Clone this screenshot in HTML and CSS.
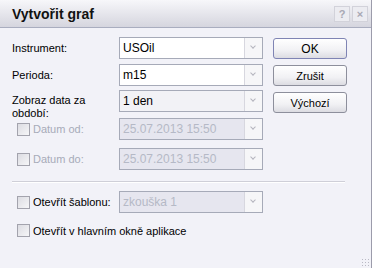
FILE: index.html
```html
<!DOCTYPE html>
<html>
<head>
    <title>Vytvořit graf</title>
    <link rel="stylesheet" href="styles.css">
</head>
<body>
    <div class="dialog">
        <div class="titlebar">
            <span class="title">Vytvořit graf</span>
            <span class="tb-btn">?</span>
            <span class="tb-btn">&#215;</span>
        </div>
        <div class="content">
            <div class="form">
                <div class="row row-instrument">
                    <label class="lbl">Instrument:</label>
                    <div class="combo"><span class="val">USOil</span><span class="arrow"></span></div>
                </div>
                <div class="row row-perioda">
                    <label class="lbl">Perioda:</label>
                    <div class="combo"><span class="val">m15</span><span class="arrow"></span></div>
                </div>
                <div class="row row-zobraz">
                    <label class="lbl lbl-two">Zobraz data za<br>období:</label>
                    <div class="combo combo-grey"><span class="val">1 den</span><span class="arrow"></span></div>
                </div>
                <div class="row row-od">
                    <label class="lbl lbl-check disabled"><span class="check"></span>Datum od:</label>
                    <div class="combo combo-disabled"><span class="val">25.07.2013 15:50</span><span class="arrow"></span></div>
                </div>
                <div class="row row-do">
                    <label class="lbl lbl-check disabled"><span class="check"></span>Datum do:</label>
                    <div class="combo combo-disabled"><span class="val">25.07.2013 15:50</span><span class="arrow"></span></div>
                </div>
            </div>
            <div class="buttons">
                <button class="btn btn-default">OK</button>
                <button class="btn">Zrušit</button>
                <button class="btn">Výchozí</button>
            </div>
        </div>
        <div class="separator"></div>
        <div class="row row-sablona">
            <label class="lbl lbl-check"><span class="check"></span>Otevřít šablonu:</label>
            <div class="combo combo-disabled"><span class="val">zkouška 1</span><span class="arrow"></span></div>
        </div>
        <div class="row row-hlavni">
            <label class="lbl lbl-check"><span class="check"></span>Otevřít v hlavním okně aplikace</label>
        </div>
        <div class="grip"></div>
    </div>
</body>
</html>
```
FILE: styles.css
```css
body {
    margin: 0;
    background-color: #ffffff;
    font-family: "Liberation Sans", Arial, sans-serif;
    font-size: 11px;
    color: #000000;
}

.dialog {
    position: relative;
    width: 371px;
    height: 268px;
    background-color: #f2f2f8;
    border-right: 1px solid #9c9cab;
    overflow: hidden;
}

.titlebar {
    display: flex;
    align-items: center;
    height: 28px;
    box-sizing: border-box;
    padding: 0 3px 0 12px;
    background: linear-gradient(#f7f7fa, #e6e6ec 50%, #d5d5de);
    border-bottom: 1px solid #a9adbf;
}

.title {
    flex: 1;
    font-size: 14px;
    font-weight: bold;
    color: #111111;
}

.tb-btn {
    width: 16px;
    height: 16px;
    margin-left: 2px;
    box-sizing: border-box;
    border: 1px solid #d2d2da;
    background-color: #ececf1;
    color: #a8a8b4;
    font-size: 11px;
    font-weight: bold;
    line-height: 14px;
    text-align: center;
}

.content {
    display: flex;
    padding: 9px 0 0 12px;
}

.form {
    width: 251px;
}

.row {
    display: flex;
    align-items: center;
}

.lbl {
    width: 107px;
    display: flex;
    align-items: center;
}

.lbl-two {
    display: block;
    height: 22px;
    box-sizing: border-box;
    padding-top: 4px;
    line-height: 13px;
    overflow: visible;
}

.lbl-check {
    padding-left: 5px;
    width: 102px;
}

.disabled {
    color: #a7abb8;
}

.check {
    width: 11px;
    height: 11px;
    margin-right: 3px;
    border: 1px solid #a3a3ad;
    background: linear-gradient(135deg, #dcdce2, #f6f6f8);
}

.combo {
    display: flex;
    width: 144px;
    height: 22px;
    box-sizing: border-box;
    border: 1px solid #a6aab8;
    background-color: #ffffff;
}

.combo-grey {
    background-color: #f2f2f6;
}

.combo-disabled {
    background-color: #e6e6ef;
    color: #b5b9c6;
}

.val {
    flex: 1;
    padding-left: 3px;
    line-height: 20px;
    font-size: 12px;
}

.arrow {
    width: 17px;
    border-left: 1px solid #d7d7df;
    background-color: #f6f6f8;
    position: relative;
}

.arrow::after {
    content: "";
    position: absolute;
    left: 6px;
    top: 6px;
    width: 3px;
    height: 3px;
    border-right: 1px solid #b4b4be;
    border-bottom: 1px solid #b4b4be;
    transform: rotate(45deg);
}

.row-perioda { margin-top: 5px; }
.row-zobraz { margin-top: 4px; }
.row-od { margin-top: 6px; }
.row-do { margin-top: 8px; }

.buttons {
    display: flex;
    flex-direction: column;
    gap: 6px;
    margin-left: 10px;
    padding-top: 1px;
}

.btn {
    width: 74px;
    height: 21px;
    padding: 0;
    border: 1px solid #8d8f9c;
    border-radius: 3px;
    background: linear-gradient(#ffffff, #f1f1f4 60%, #dcdce2);
    font-family: "Liberation Sans", Arial, sans-serif;
    font-size: 11px;
    color: #000000;
}

.btn-default {
    border-color: #7f84b4;
    font-size: 12px;
}

.separator {
    margin: 11px 26px 0 12px;
    border-top: 1px solid #cfcfd8;
    border-bottom: 1px solid #ffffff;
}

.row-sablona {
    margin: 8px 0 0 12px;
}

.row-hlavni {
    margin: 11px 0 0 12px;
}

.row-hlavni .lbl {
    width: auto;
}

.grip {
    position: absolute;
    right: 2px;
    bottom: 2px;
    width: 8px;
    height: 8px;
    background: radial-gradient(circle, #b9b9c4 1px, transparent 1px) 0 0 / 3px 3px;
}
```
